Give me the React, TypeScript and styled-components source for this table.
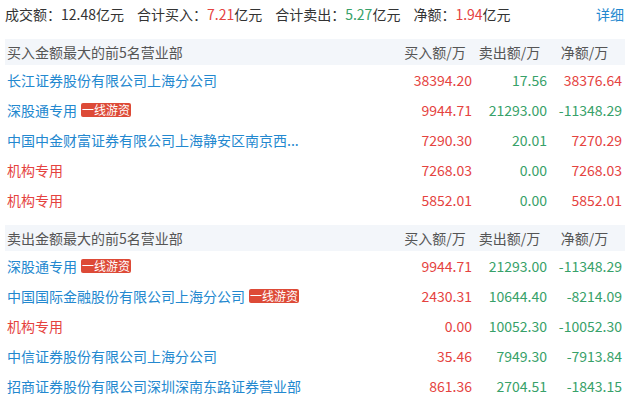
import styled, { createGlobalStyle } from 'styled-components'

const GlobalStyle = createGlobalStyle`
  body {
    margin: 0;
    background: #fff;
    font-family: "Noto Sans CJK SC", "Noto Sans", sans-serif;
  }
`

const RED = '#e5433f'
const GREEN = '#37a169'
const BLUE = '#2388cf'
const TEXT = '#333'

const Page = styled.div`
  width: 629px;
  font-size: 14px;
  color: ${TEXT};
`

const SummaryBar = styled.div`
  display: flex;
  align-items: center;
  height: 28px;
  padding: 0 5px;
  gap: 13px;
  white-space: nowrap;
`

const SummaryItem = styled.span``

const Value = styled.span<{ $color: string }>`
  color: ${(p) => p.$color};
`

const DetailLink = styled.a`
  margin-left: auto;
  color: ${BLUE};
  text-decoration: none;
  cursor: pointer;
`

const Section = styled.div`
  margin: 11px 4px 0 5px;

  & + & {
    margin-top: 10px;
  }
`

const Grid = styled.div`
  display: grid;
  grid-template-columns: 1fr 74px 75px 75px;
  align-items: center;
  padding: 0 3px 0 2px;
`

const HeaderRow = styled(Grid)`
  height: 26px;
  background: #f3f6fa;
  color: #555;
`

const HeaderCell = styled.div<{ $left?: boolean }>`
  text-align: ${(p) => (p.$left ? 'left' : 'center')};
  white-space: nowrap;
`

const Row = styled(Grid)`
  height: 30px;
`

const NameCell = styled.div<{ $institution: boolean }>`
  display: flex;
  align-items: center;
  gap: 4px;
  min-width: 0;
  color: ${(p) => (p.$institution ? RED : BLUE)};
  white-space: nowrap;
  overflow: hidden;
`

const Name = styled.span`
  overflow: hidden;
  text-overflow: ellipsis;
`

const Badge = styled.span`
  flex: none;
  height: 14px;
  line-height: 14px;
  padding: 0 1px;
  border-radius: 2px;
  background: #dd4a37;
  color: #fff;
  font-size: 12px;
`

const NumCell = styled.div<{ $color: string }>`
  text-align: right;
  color: ${(p) => p.$color};
  white-space: nowrap;
`

interface Seat {
  name: string
  hot?: boolean
  institution?: boolean
  buy: string
  sell: string
  net: string
}

const buyTop: Seat[] = [
  { name: '长江证券股份有限公司上海分公司', buy: '38394.20', sell: '17.56', net: '38376.64' },
  { name: '深股通专用', hot: true, buy: '9944.71', sell: '21293.00', net: '-11348.29' },
  { name: '中国中金财富证券有限公司上海静安区南京西...', buy: '7290.30', sell: '20.01', net: '7270.29' },
  { name: '机构专用', institution: true, buy: '7268.03', sell: '0.00', net: '7268.03' },
  { name: '机构专用', institution: true, buy: '5852.01', sell: '0.00', net: '5852.01' },
]

const sellTop: Seat[] = [
  { name: '深股通专用', hot: true, buy: '9944.71', sell: '21293.00', net: '-11348.29' },
  { name: '中国国际金融股份有限公司上海分公司', hot: true, buy: '2430.31', sell: '10644.40', net: '-8214.09' },
  { name: '机构专用', institution: true, buy: '0.00', sell: '10052.30', net: '-10052.30' },
  { name: '中信证券股份有限公司上海分公司', buy: '35.46', sell: '7949.30', net: '-7913.84' },
  { name: '招商证券股份有限公司深圳深南东路证券营业部', buy: '861.36', sell: '2704.51', net: '-1843.15' },
]

const SeatTable = ({ title, seats }: { title: string; seats: Seat[] }) => (
  <Section>
    <HeaderRow>
      <HeaderCell $left>{title}</HeaderCell>
      <HeaderCell>买入额/万</HeaderCell>
      <HeaderCell>卖出额/万</HeaderCell>
      <HeaderCell>净额/万</HeaderCell>
    </HeaderRow>
    {seats.map((s, i) => (
      <Row key={i}>
        <NameCell $institution={!!s.institution}>
          <Name>{s.name}</Name>
          {s.hot && <Badge>一线游资</Badge>}
        </NameCell>
        <NumCell $color={RED}>{s.buy}</NumCell>
        <NumCell $color={GREEN}>{s.sell}</NumCell>
        <NumCell $color={s.net.startsWith('-') ? GREEN : RED}>{s.net}</NumCell>
      </Row>
    ))}
  </Section>
)

const App = () => {
  return (
    <Page>
      <GlobalStyle />
      <SummaryBar>
        <SummaryItem>
          成交额：<Value $color={TEXT}>12.48</Value>亿元
        </SummaryItem>
        <SummaryItem>
          合计买入：<Value $color={RED}>7.21</Value>亿元
        </SummaryItem>
        <SummaryItem>
          合计卖出：<Value $color={GREEN}>5.27</Value>亿元
        </SummaryItem>
        <SummaryItem>
          净额：<Value $color={RED}>1.94</Value>亿元
        </SummaryItem>
        <DetailLink>详细</DetailLink>
      </SummaryBar>
      <SeatTable title="买入金额最大的前5名营业部" seats={buyTop} />
      <SeatTable title="卖出金额最大的前5名营业部" seats={sellTop} />
    </Page>
  )
}

export default App
